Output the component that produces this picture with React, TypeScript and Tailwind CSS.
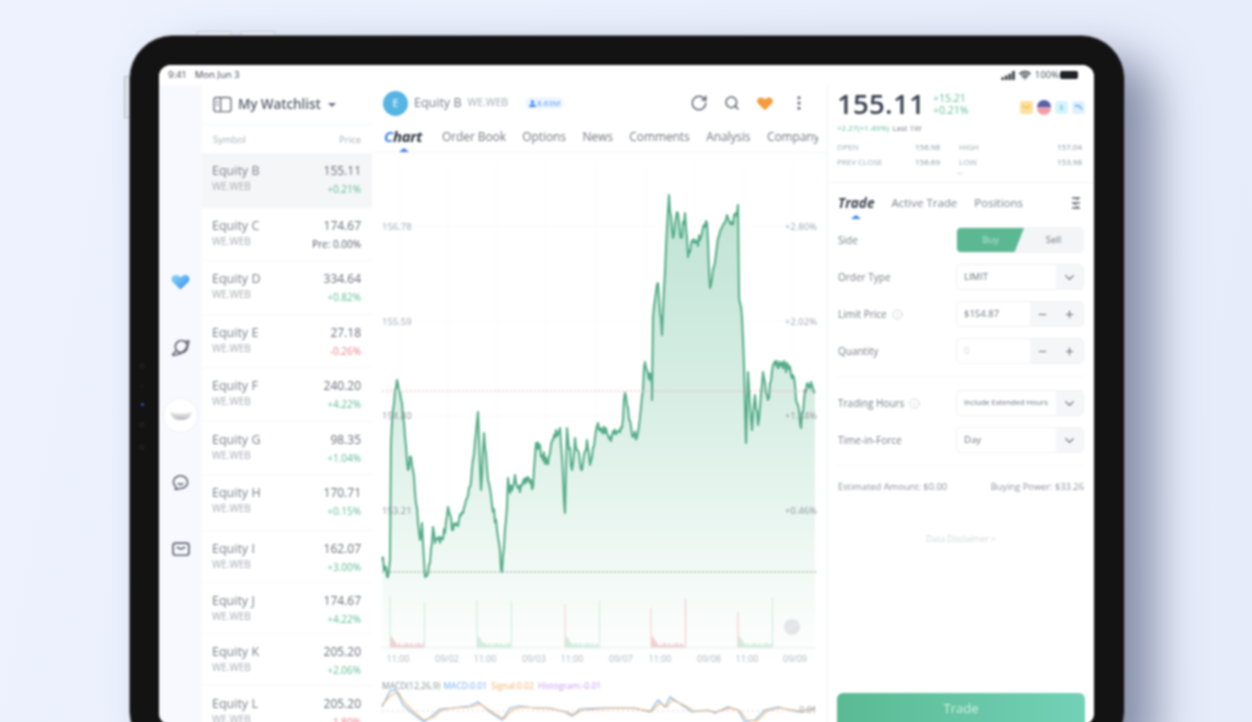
import { ChevronDown, Minus, Plus, RotateCw, Search, MoreVertical, Info, Wifi } from 'lucide-react';

const font = "font-['Open_Sans',sans-serif]";

const rows = [
	{ name: 'Equity B', price: '155.11', change: '+0.21%', tone: 'text-[#5dbd95]', h: 'h-[55px]', bg: 'bg-[#f5f6f7]' },
	{ name: 'Equity C', price: '174.67', change: 'Pre: 0.00%', tone: 'text-[#555c68]', h: 'h-[53px]', bg: '' },
	{ name: 'Equity D', price: '334.64', change: '+0.82%', tone: 'text-[#5dbd95]', h: 'h-[54px]', bg: '' },
	{ name: 'Equity E', price: '27.18', change: '-0.26%', tone: 'text-[#e8808a]', h: 'h-[53px]', bg: '' },
	{ name: 'Equity F', price: '240.20', change: '+4.22%', tone: 'text-[#5dbd95]', h: 'h-[54px]', bg: '' },
	{ name: 'Equity G', price: '98.35', change: '+1.04%', tone: 'text-[#5dbd95]', h: 'h-[53px]', bg: '' },
	{ name: 'Equity H', price: '170.71', change: '+0.15%', tone: 'text-[#5dbd95]', h: 'h-[56px]', bg: '' },
	{ name: 'Equity I', price: '162.07', change: '+3.00%', tone: 'text-[#5dbd95]', h: 'h-[52px]', bg: '' },
	{ name: 'Equity J', price: '174.67', change: '+4.22%', tone: 'text-[#5dbd95]', h: 'h-[51px]', bg: '' },
	{ name: 'Equity K', price: '205.20', change: '+2.06%', tone: 'text-[#5dbd95]', h: 'h-[52px]', bg: '' },
	{ name: 'Equity L', price: '205.20', change: '-1.80%', tone: 'text-[#e8808a]', h: 'h-[52px]', bg: '' },
];

const tabs = ['Order Book', 'Options', 'News', 'Comments', 'Analysis', 'Company'];

// rough trace of the price line, in page coordinates
const trace: [number, number][] = [
	[382, 560], [388, 577], [390, 560], [391, 443], [392, 423], [395, 390], [397, 380], [400, 393], [402, 403], [405, 437],
	[408, 470], [411, 457], [414, 477], [418, 523], [420, 540], [422, 523], [425, 577], [430, 563], [433, 527], [435, 543],
	[445, 533], [448, 507], [453, 530], [463, 513], [470, 487], [473, 460], [478, 412], [481, 490], [484, 433], [488, 480],
	[497, 530], [502, 572], [507, 507], [508, 478], [510, 493], [515, 475], [520, 492], [528, 477], [533, 487], [536, 443],
	[547, 463], [553, 440], [560, 428], [565, 513], [567, 428], [572, 470], [575, 438], [582, 470], [587, 440], [590, 465],
	[598, 423], [610, 437], [622, 428], [625, 393], [632, 435], [637, 437], [642, 397], [645, 362], [652, 385], [652, 400],
	[653, 318], [658, 283], [662, 335], [667, 228], [669, 195], [673, 238], [677, 212], [681, 238], [685, 213], [688, 257],
	[693, 242], [700, 240], [707, 223], [710, 288], [718, 238], [727, 215], [732, 222], [738, 205], [739, 298], [742, 318],
	[744, 365], [746, 443], [748, 372], [752, 430], [755, 395], [758, 425], [763, 372], [768, 400], [773, 365], [782, 363],
	[793, 375], [801, 428], [805, 390], [811, 382], [815, 392],
];

function jagged(points: [number, number][]) {
	let seed = 7;
	const rnd = () => {
		seed = (seed * 16807) % 2147483647;
		return seed / 2147483647;
	};
	const out: string[] = [];
	points.forEach(([x, y], i) => {
		out.push(`${x},${y}`);
		const next = points[i + 1];
		if (!next || next[0] - x < 2) return;
		const steps = Math.floor(next[0] - x);
		for (let s = 1; s < steps; s++) {
			const t = s / steps;
			const py = y + (next[1] - y) * t + (rnd() - 0.5) * 11;
			out.push(`${(x + (next[0] - x) * t).toFixed(1)},${py.toFixed(1)}`);
		}
	});
	return out.join(' ');
}

const linePoints = jagged(trace);

const macd = '382,707 390,691 396,690 403,705 412,713 424,722 432,716 440,709 452,708 470,706 478,702 490,712 502,720 510,708 520,706 535,708 550,708 565,712 572,716 580,709 600,708 620,708 635,708 650,712 658,700 665,707 670,697 682,705 692,712 708,710 715,713 728,707 738,710 745,722 755,720 765,710 778,707 798,712 815,708';
const signal = '382,705 390,696 398,692 405,703 414,712 424,720 434,717 442,710 454,708 472,707 480,704 492,712 504,719 512,710 522,707 537,708 552,709 567,712 574,715 582,710 602,709 622,708 637,709 652,711 660,703 667,707 672,700 684,705 694,711 710,711 717,712 730,708 740,711 747,720 757,721 767,711 780,708 800,711 815,709';

const volumeStarts = [
	{ x: 390, a: '#bfe6d4', b: '#bfe6d4' },
	{ x: 477, a: '#bfe6d4', b: '#bfe6d4' },
	{ x: 565, a: '#f0c4c8', b: '#bfe6d4' },
	{ x: 651, a: '#f0c4c8', b: '#f0b4ba' },
	{ x: 738, a: '#f0b4ba', b: '#bfe6d4' },
];

function VolumeBars() {
	const bars: { x: number; y: number; c: string }[] = [];
	volumeStarts.forEach(({ x: start, a, b }, c) => {
		for (let i = 0; i <= 35; i += 1.5) {
			const edge = i === 0 ? 52 - c * 4 : i === 34.5 ? 46 + c : 0;
			const spike = edge || (i < 7 ? 14 - i * 1.5 : 2 + ((i * 7 + c * 3) % 4));
			const color = edge ? (i === 0 ? a : b) : Math.floor(i * 2 + c) % 3 === 0 ? '#e6a7ae' : '#a9dcc5';
			bars.push({ x: start + i, y: 648 - spike, c: color });
		}
	});
	return (
		<g strokeWidth="0.8">
			{bars.map((b, i) => (
				<line key={i} x1={b.x} x2={b.x} y1={648} y2={b.y} stroke={b.c} />
			))}
		</g>
	);
}

function Chart() {
	const gridX = [399, 448, 497, 546, 596, 645, 694, 744, 793];
	const gridY = [226, 321, 416, 510];
	const times = [['11:00', 398], ['09/02', 447], ['11:00', 485], ['09/03', 534], ['11:00', 572], ['09/07', 621], ['11:00', 660], ['09/08', 709], ['11:00', 747], ['09/09', 795]] as const;
	return (
		<svg viewBox="372 153 455 572" className="block w-[455px] h-[572px]">
			<defs>
				<linearGradient id="area" x1="0" y1="195" x2="0" y2="665" gradientUnits="userSpaceOnUse">
					<stop offset="0" stopColor="#bfe3d4" />
					<stop offset="0.5" stopColor="#dcf0e8" />
					<stop offset="0.85" stopColor="#f5fbf8" />
					<stop offset="1" stopColor="#ffffff" />
				</linearGradient>
			</defs>
			{gridX.map((x) => (
				<line key={x} x1={x} x2={x} y1={165} y2={648} stroke="#f2f3f5" strokeDasharray="1 2" />
			))}
			{gridY.map((y) => (
				<line key={y} x1={382} x2={816} y1={y} y2={y} stroke="#eff0f3" strokeDasharray="1 2" />
			))}
			<polygon points={`382,665 ${linePoints} 815,665`} fill="url(#area)" />
			<polyline points={linePoints} fill="none" stroke="#52ab86" strokeWidth="2" strokeLinejoin="round" />
			<line x1={382} x2={816} y1={391} y2={391} stroke="#f0a5ac" strokeDasharray="2 2" />
			<line x1={382} x2={816} y1={572} y2={572} stroke="#8f9999" strokeDasharray="2 2" />
			<VolumeBars />
			<line x1={382} x2={816} y1={648} y2={648} stroke="#edeff1" />
			<circle cx={792} cy={627} r={8} fill="#e3e5e7" />
			<line x1={788} x2={796} y1={631} y2={623} stroke="#f4f5f6" />
			<g fontSize="9.5" fill="#a3a7ae">
				<text x={382} y={230}>156.78</text>
				<text x={382} y={325}>155.59</text>
				<text x={382} y={419} fill="#8f949b">154.40</text>
				<text x={382} y={514} fill="#8f949b">153.21</text>
				<text x={817} y={230} textAnchor="end">+2.80%</text>
				<text x={817} y={325} textAnchor="end">+2.02%</text>
				<text x={817} y={419} textAnchor="end" fill="#8f949b">+1.24%</text>
				<text x={817} y={514} textAnchor="end" fill="#8f949b">+0.46%</text>
			</g>
			<g fontSize="9" fill="#b3b6bc" textAnchor="middle">
				{times.map(([label, x], i) => (
					<text key={i} x={x} y={662}>{label}</text>
				))}
			</g>
			<text x={382} y={689} fontSize="8.500">
				<tspan fill="#8b8f97">MACD(12,26,9) </tspan>
				<tspan fill="#74aef5" dx="1">MACD:0.01 </tspan>
				<tspan fill="#f2b26b" dx="2">Signal:0.02 </tspan>
				<tspan fill="#c79af3" dx="2">Histogram:-0.01</tspan>
			</text>
			<line x1={382} x2={816} y1={711} y2={711} stroke="#f3c3c7" strokeDasharray="2 3" />
			<polyline points={macd} fill="none" stroke="#7db5ea" strokeWidth="1.200" />
			<polyline points={signal} fill="none" stroke="#f0bb80" strokeWidth="1.200" />
			<text x={817} y={713} fontSize="9" fill="#9a9ea5" textAnchor="end">0.01</text>
		</svg>
	);
}

function Rail() {
	return (
		<div className="w-[43px] shrink-0 bg-[#f8f9fe] pt-[184px] flex flex-col items-center gap-[43px]">
			<div className="h-6 w-6 flex items-center justify-center">
				<svg viewBox="0 0 24 24" className="w-[21px] h-[21px]">
					<defs>
						<linearGradient id="hrt" x1="0" y1="0" x2="1" y2="1">
							<stop offset="0" stopColor="#8fd8f7" />
							<stop offset="1" stopColor="#2f8cf0" />
						</linearGradient>
					</defs>
					<path d="M12 21 3 12.500C.6 9.800 1.500 5 6 4.500c2.600-.3 4.600 1 6 3 1.400-2 3.400-3.300 6-3 4.500.5 5.400 5.300 3 8z" fill="url(#hrt)" />
				</svg>
			</div>
			<div className="h-6 w-6 flex items-center justify-center">
				<svg viewBox="0 0 24 24" className="w-[21px] h-[21px] -mt-[2px]" fill="none" stroke="#5d6470" strokeWidth="1.900">
					<circle cx="13" cy="11" r="7" />
					<path d="M7.500 15.500C5 18 2.500 20 3 20.500c1.500 1 9-1 13-4.500 3.500-3.500 6-10 5.500-11.500-.5-.8-3 .5-4.500 1.500" />
				</svg>
			</div>
			<div className="h-6 w-6 flex items-center justify-center">
				<div className="w-[35px] h-[35px] shrink-0 rounded-full border border-[#eef0f2] bg-white flex items-center justify-center">
					<svg viewBox="0 0 24 14" className="w-[22px] h-[13px]">
						<defs>
							<linearGradient id="bowl" x1="0" y1="0" x2="0" y2="1">
								<stop offset="0" stopColor="#f4f5f6" />
								<stop offset="1" stopColor="#b4b8be" />
							</linearGradient>
						</defs>
						<path d="M0 2c5 4 19 4 24 0-.5 6-5 10-12 10S.5 8 0 2z" fill="url(#bowl)" />
					</svg>
				</div>
			</div>
			<div className="h-6 w-6 flex items-center justify-center">
				<svg viewBox="0 0 24 24" className="w-[19px] h-[19px]" fill="none" stroke="#5d6470" strokeWidth="2">
					<path d="M12 3.500c5 0 9 3.300 9 8s-4 8-9 8c-2 0-5 1-6.500 1 .6-1 1-2 .6-3C4 16 3 14 3 11.500c0-4.700 4-8 9-8z" />
					<path d="M8.500 13c2 1.500 5 1.500 7 0" />
				</svg>
			</div>
			<div className="h-6 w-6 flex items-center justify-center">
				<svg viewBox="0 0 24 24" className="w-[20px] h-[20px]" fill="none" stroke="#5d6470" strokeWidth="2">
					<rect x="2.500" y="5" width="19" height="14.500" rx="3" />
					<path d="M7 9.500c3 3 7 3 10 0" />
				</svg>
			</div>
		</div>
	);
}

function Watchlist() {
	return (
		<div className="w-[170px] shrink-0 bg-white overflow-hidden">
			<div className="h-[40px] pl-[11px] flex items-center gap-[6px] border-b border-[#f4f6fa]">
				<svg viewBox="0 0 20 18" className="w-[19px] h-[17px]" fill="none" stroke="#6b717c" strokeWidth="1.500">
					<rect x="1" y="1.500" width="18" height="15" rx="2.500" />
					<path d="M8 1.500v15M3.500 6h2M3.500 9.500h2" />
				</svg>
				<span className="text-[13.500px] font-semibold text-[#5b616d] tracking-[-0.1px]">My Watchlist</span>
				<span className="w-0 h-0 ml-[1px] border-x-[4px] border-x-transparent border-t-[4px] border-t-[#6b717c]" />
			</div>
			<div className="h-[28px] pl-[11px] pr-[11px] pt-[2px] flex items-center justify-between text-[9.500px] text-[#a9adb5]">
				<span>Symbol</span>
				<span>Price</span>
			</div>
			{rows.map((r) => (
				<div key={r.name} className={`${r.h} ${r.bg} pl-[10px] pr-[11px] pt-[9px] flex justify-between border-b border-[#f6f7f8]`}>
					<div className="flex flex-col">
						<span className="text-[12.500px] leading-[17px] text-[#7b808a]">{r.name}</span>
						<span className="text-[10px] leading-[14px] text-[#a7abb2]">WE.WEB</span>
					</div>
					<div className="flex flex-col items-end">
						<span className="text-[12px] leading-[18px] text-[#666c77]">{r.price}</span>
						<span className={`text-[10px] leading-[14px] mt-[2px] ${r.tone}`}>{r.change}</span>
					</div>
				</div>
			))}
		</div>
	);
}

function ChartPanel() {
	return (
		<div className="w-[456px] shrink-0 bg-white border-r border-[#f1f3f7] overflow-hidden">
			<div className="h-[36px] pl-[11px] pr-[19px] flex items-center">
				<div className="w-[25px] h-[25px] rounded-full bg-[#56b4e3] flex items-center justify-center text-white text-[11px]">E</div>
				<span className="ml-[6px] text-[12.500px] text-[#767c88]">Equity B</span>
				<span className="ml-[6px] text-[10.500px] text-[#a5a9b2]">WE.WEB</span>
				<span className="ml-[17px] h-[12px] px-[4px] rounded-full bg-[#eff6ff] flex items-center gap-[1px] text-[8px] text-[#4d94f2]">
					<svg viewBox="0 0 10 10" className="w-[7px] h-[7px]" fill="#3d86ee">
						<circle cx="5" cy="3" r="2.500" />
						<path d="M0 10c0-3 2-4 5-4s5 1 5 4z" />
					</svg>
					8.63M
				</span>
				<div className="ml-auto flex items-center gap-[16px]">
					<RotateCw className="w-[18px] h-[18px] text-[#5c626d]" strokeWidth={2} />
					<Search className="w-[16px] h-[16px] text-[#5c626d]" strokeWidth={2.200} />
					<svg viewBox="0 0 24 24" className="w-[18px] h-[18px]">
						<path d="M12 21.500 2.800 12.500C.4 9.800 1.500 4.500 6.500 4.500c2.400 0 4.300 1.200 5.500 3 1.200-1.800 3.100-3 5.500-3 5 0 6.100 5.300 3.700 8z" fill="#f49c3c" />
					</svg>
					<MoreVertical className="w-[18px] h-[18px] text-[#5c626d]" strokeWidth={2.200} />
				</div>
			</div>
			<div className="relative h-[32px] pl-[12px] flex items-center border-b border-[#f4f5f7] whitespace-nowrap">
				<span className="text-[15px] font-bold italic text-[#2e3440] w-[39px] tracking-[-0.3px]">
					<span className="text-[#3b82ee]">C</span>hart
				</span>
				<div className="ml-[19px] w-[376px] overflow-hidden flex gap-[16.500px] text-[12px] text-[#72777f] tracking-[-0.1px]">
					{tabs.map((t) => (
						<span key={t}>{t}</span>
					))}
				</div>
				<span className="absolute left-[27px] bottom-0 w-0 h-0 border-x-[5px] border-x-transparent border-b-[4px] border-b-[#3b82ee]" />
			</div>
			<Chart />
		</div>
	);
}

function Field({ label, info, children }: { label: string; info?: boolean; children: React.ReactNode }) {
	return (
		<div className="h-[26px] flex items-center justify-between">
			<span className="flex items-center gap-[5px] text-[10px] text-[#777c85]">
				{label}
				{info && <Info className="w-[11px] h-[11px] text-[#c2c5ca]" strokeWidth={1.500} />}
			</span>
			<div className="w-[128px] h-[26px] flex rounded-[5px] border border-[#eff1f3] overflow-hidden">{children}</div>
		</div>
	);
}

function SelectField({ value, small }: { value: string; small?: boolean }) {
	return (
		<>
			<span className={`flex-1 pl-[7px] flex items-center text-[#6f747d] ${small ? 'text-[7.500px]' : 'text-[9.500px]'}`}>{value}</span>
			<span className="w-[27px] bg-[#f5f6f8] flex items-center justify-center">
				<ChevronDown className="w-[15px] h-[15px] text-[#6a6f78]" strokeWidth={2} />
			</span>
		</>
	);
}

function StepField({ value, muted }: { value: string; muted?: boolean }) {
	return (
		<>
			<span className={`flex-1 pl-[7px] flex items-center text-[9.500px] ${muted ? 'text-[#d3d6da]' : 'text-[#6f747d]'}`}>{value}</span>
			<span className="w-[53px] bg-[#f5f6f8] flex items-center justify-between pl-[7px] pr-[8px]">
				<Minus className="w-[11px] h-[11px] text-[#6a6f78]" strokeWidth={2.500} />
				<Plus className="w-[11px] h-[11px] text-[#6a6f78]" strokeWidth={2.500} />
			</span>
		</>
	);
}

function TradePanel() {
	return (
		<div className="flex-1 bg-white flex flex-col overflow-hidden">
			<div className="h-[98px] pl-[9px] pr-[12px] border-b border-[#f1f3f7] shrink-0">
				<div className="h-[37px] pt-[1px] flex items-center">
					<span className="text-[27.500px] leading-[32px] font-semibold text-[#3b4250] tracking-[0.3px]">155.11</span>
					<div className="ml-[8px] flex flex-col text-[10.500px] leading-[12px] text-[#62c09a]">
						<span>+15.21</span>
						<span>+0.21%</span>
					</div>
					<div className="ml-auto -mr-[3px] mt-[6px] flex items-center gap-[4px]">
						<span className="w-[13px] h-[13px] rounded-[3px] bg-[#fbe0a0] flex items-center justify-center">
							<svg viewBox="0 0 10 10" className="w-[9px] h-[9px]" fill="none" stroke="#f3bd45" strokeWidth="1.500">
								<path d="M1 2.500 5 6l4-3.500" />
							</svg>
						</span>
						<span className="w-[14px] h-[15px] rounded-full bg-[linear-gradient(#5561a8_45%,#f09fa8_45%)]" />
						<span className="w-[13px] h-[13px] rounded-[3px] bg-[#d8f3fb] flex items-center justify-center text-[8px] text-[#5ec0e0]">$</span>
						<span className="w-[13px] h-[13px] rounded-[3px] bg-[#deeffd] flex items-center justify-center">
							<svg viewBox="0 0 10 10" className="w-[9px] h-[9px]" fill="none" stroke="#5aa5ea" strokeWidth="1.500">
								<path d="M1 3h4l4 4" />
							</svg>
						</span>
					</div>
				</div>
				<div className="h-[12px] flex items-center gap-[3px] text-[8px] leading-[12px] mb-[5px]">
					<span className="text-[#62c09a]">+2.27(+1.49%)</span>
					<span className="text-[#7b808a]">Last 1W</span>
				</div>
				<div className="flex gap-[19px] text-[8px] leading-[15px] text-[#a3a7ae]">
					<div className="w-[103px]">
						<div className="flex justify-between"><span>OPEN</span><span className="text-[#8a8f97]">156.98</span></div>
						<div className="flex justify-between"><span>PREV CLOSE</span><span className="text-[#8a8f97]">156.69</span></div>
					</div>
					<div className="flex-1">
						<div className="flex justify-between"><span>HIGH</span><span className="text-[#8a8f97]">157.04</span></div>
						<div className="flex justify-between"><span>LOW</span><span className="text-[#8a8f97]">153.98</span></div>
					</div>
				</div>
				<div className="flex justify-center">
					<ChevronDown className="w-[9px] h-[9px] text-[#b4b8be]" />
				</div>
			</div>
			<div className="relative h-[35px] pl-[10px] pr-[11px] shrink-0 flex items-center pt-[5px] whitespace-nowrap">
				<span className="text-[13.500px] font-bold italic text-[#3a404c]">Trade</span>
				<span className="ml-[17px] text-[11.500px] text-[#7b808a]">Active Trade</span>
				<span className="ml-[17px] text-[11.500px] text-[#7b808a]">Positions</span>
				<svg viewBox="0 0 14 14" className="ml-auto w-[14px] h-[14px]" fill="none" stroke="#5c626d" strokeWidth="1.500">
					<path d="M3 2h8M3 7h8M3 12h8" />
					<path d="M8 2v2M6 7v2M8 12v-2" />
				</svg>
				<span className="absolute left-[23px] bottom-[-1px] w-0 h-0 border-x-[5px] border-x-transparent border-b-[4px] border-b-[#3b82ee]" />
			</div>
			<div className="pl-[10px] pr-[10px] mt-[9px] flex flex-col gap-[11px] shrink-0">
				<Field label="Side">
					<div className="relative flex-1 bg-[#f3f5f6] flex text-[9.500px]">
						<span className="w-[67px] h-full bg-[#5cb893] [clip-path:polygon(0_0,100%_0,86%_100%,0_100%)] flex items-center justify-center text-[#b9e4d2]">Buy</span>
						<span className="flex-1 flex items-center justify-center text-[#767b84]">Sell</span>
					</div>
				</Field>
				<Field label="Order Type">
					<SelectField value="LIMIT" />
				</Field>
				<Field label="Limit Price" info>
					<StepField value="$154.87" />
				</Field>
				<Field label="Quantity">
					<StepField value="0" muted />
				</Field>
			</div>
			<div className="mx-[10px] mt-[12px] border-t border-[#f5f6f7] shrink-0" />
			<div className="pl-[10px] pr-[10px] mt-[13px] flex flex-col gap-[11px] shrink-0">
				<Field label="Trading Hours" info>
					<SelectField value="Include Extended Hours" small />
				</Field>
				<Field label="Time-in-Force">
					<SelectField value="Day" />
				</Field>
			</div>
			<div className="mx-[10px] mt-[12px] border-t border-[#f5f6f7] shrink-0" />
			<div className="mt-[15px] px-[10px] flex justify-between text-[9.300px] leading-[12px] text-[#8b9098] shrink-0">
				<span>Estimated Amount: $0.00</span>
				<span>Buying Power: $33.26</span>
			</div>
			<div className="mt-[40px] text-center text-[8.500px] leading-[12px] text-[#d5d7da] shrink-0">Data Disclaimer &gt;</div>
			<div className="mt-auto mx-[9px] h-[32px] shrink-0 rounded-t-[6px] bg-[linear-gradient(90deg,#5aba94,#73d1b6)] flex items-center justify-center text-[13px] text-[#d5f1e6]">
				Trade
			</div>
		</div>
	);
}

export default function App() {
	return (
		<div className={`${font} w-[1252px] h-[722px] overflow-hidden bg-[linear-gradient(100deg,#edf2fe,#e6ecfa)] pt-[35px] pl-[129px]`}>
			<div className="relative w-[996px] h-[720px] blur-[0.8px]">
				{/* hardware buttons */}
				<div className="absolute left-[68px] -top-[4px] w-[34px] h-[4px] border border-b-0 border-[#c6cad3] bg-[#e8ecf5]" />
				<div className="absolute left-[112px] -top-[4px] w-[34px] h-[4px] border border-b-0 border-[#c6cad3] bg-[#e8ecf5]" />
				<div className="absolute -left-[5px] top-[41px] w-[5px] h-[42px] border border-r-0 border-[#b4b8c1] bg-[#dfe3ec]" />
				<div className="h-full rounded-[44px] bg-[#131313] border border-[#7d7f84] pl-[29px] pt-[29px] pr-[30px] pb-[29px] shadow-[30px_22px_45px_rgba(70,80,115,0.6)]">
					{/* camera dots */}
					<div className="absolute left-[10px] top-[328px] flex flex-col items-center gap-[16px]">
						<span className="w-[6px] h-[6px] rounded-full bg-[#1d1d1d]" />
						<span className="w-[2px] h-[2px] rounded-full bg-[#262626]" />
						<span className="w-[3px] h-[3px] rounded-full bg-[#2a5fb4]" />
						<span className="w-[6px] h-[6px] rounded-full bg-[#1d1d1d]" />
						<span className="w-[6px] h-[6px] rounded-full bg-[#1d1d1d]" />
					</div>
					<div className="relative h-full rounded-[12px] overflow-hidden bg-white flex flex-col text-[#5b616d]">
						<div className="h-[20px] shrink-0 flex items-center pl-[9px] pr-[16px] text-[9.500px] text-[#444a55] bg-white">
							<span>9:41</span>
							<span className="ml-[8px]">Mon Jun 3</span>
							<div className="ml-auto flex items-center gap-[3px]">
								<svg viewBox="0 0 16 10" className="w-[15px] h-[9px]" fill="#3a3f48">
									<rect x="0" y="7" width="3" height="3" rx="0.500" />
									<rect x="4" y="5" width="3" height="5" rx="0.500" />
									<rect x="8" y="3" width="3" height="7" rx="0.500" />
									<rect x="12" y="0" width="3" height="10" rx="0.500" />
								</svg>
								<Wifi className="w-[12px] h-[12px] text-[#3a3f48]" strokeWidth={3} />
								<span className="ml-[1px] text-[9.500px]">100%</span>
								<span className="w-[18px] h-[8px] -ml-[2px] rounded-[2px] bg-[#1e2128]" />
							</div>
						</div>
						<div className="flex flex-1 min-h-0">
							<Rail />
							<Watchlist />
							<ChartPanel />
							<TradePanel />
						</div>
					</div>
				</div>
			</div>
		</div>
	);
}
